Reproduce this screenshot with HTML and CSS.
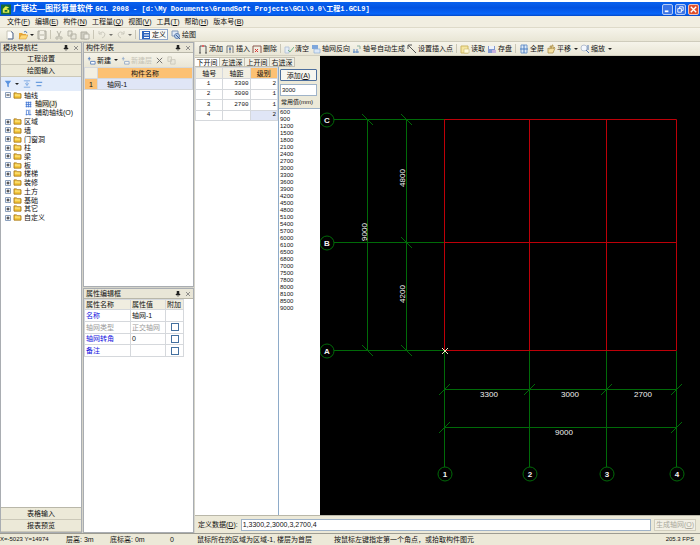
FILE: index.html
```html
<!DOCTYPE html>
<html lang="zh-CN">
<head>
<meta charset="utf-8">
<title>广联达—图形算量软件 GCL 2008</title>
<link rel="stylesheet" href="styles.css">
</head>
<body>
<svg class="defs" aria-hidden="true">
  <symbol id="new" viewBox="0 0 10 10"><path d="M2 1h4l2 2v6H2z" fill="#fff" stroke="#c8c6b8"/><path d="M6 1.5 8 3v6H3" fill="none" stroke="#5a7099"/></symbol>
  <symbol id="open" viewBox="0 0 10 10"><path d="M1 9V3h3l1 1h3v5z" fill="#e9a83a"/><path d="M1 9l2-4h7L8 9z" fill="#ffd978" stroke="#c98a2a" stroke-width=".5"/><path d="M6 2q2-2 3 1" fill="none" stroke="#4b78b8"/></symbol>
  <symbol id="save" viewBox="0 0 10 10"><path d="M1 1h8v8H1z" fill="#d4d2c6" stroke="#aaa89b"/><path d="M3 1h4v3H3zM3 6h4v3H3z" fill="#f3f1e7"/></symbol>
  <symbol id="cut" viewBox="0 0 10 10"><path d="M3 1l3 6M7 1 4 7" stroke="#b5b3a6" fill="none"/><circle cx="3" cy="8" r="1.2" fill="none" stroke="#b5b3a6"/><circle cx="7" cy="8" r="1.2" fill="none" stroke="#b5b3a6"/></symbol>
  <symbol id="copy" viewBox="0 0 10 10"><path d="M1 1h4v5H1zM4 4h5v5H4z" fill="#e8e6da" stroke="#b5b3a6"/></symbol>
  <symbol id="paste" viewBox="0 0 10 10"><path d="M1 2h6v7H1z" fill="#cfcdc1" stroke="#b0aea1"/><path d="M4 4h5v5H4z" fill="#f0eee4" stroke="#b5b3a6"/></symbol>
  <symbol id="undo" viewBox="0 0 10 10"><path d="M2 4q4-4 6 0q0 3-3 4M2 1v3h3" fill="none" stroke="#b5b3a6"/></symbol>
  <symbol id="redo" viewBox="0 0 10 10"><path d="M8 4q-4-4-6 0q0 3 3 4M8 1v3H5" fill="none" stroke="#b5b3a6"/></symbol>
  <symbol id="define" viewBox="0 0 10 10"><path d="M1 1h8v8H1z" fill="#2e65bd"/><path d="M3 2h5v1H3zM3 4.500h5v1H3zM3 7h5v1H3z" fill="#fff"/></symbol>
  <symbol id="draw" viewBox="0 0 10 10"><path d="M1 1h6v5H1z" fill="#dfe8f5" stroke="#8298b8"/><circle cx="6" cy="6" r="2.500" fill="#b9cfe9" stroke="#5f7fae"/><path d="M5 5l4 4" stroke="#3a5f9c"/></symbol>
  <symbol id="axis" viewBox="0 0 10 10"><path d="M2 9V2h2M8 9V2H6M1 9h2M7 9h2" fill="none" stroke="#555"/><path d="M4 1h2v2H4z" fill="#d66"/></symbol>
  <symbol id="axisin" viewBox="0 0 10 10"><path d="M2 9V2h6v7M5 3v6" fill="none" stroke="#777"/><path d="M4 4h2v2H4z" fill="#5a86c8"/></symbol>
  <symbol id="axisdel" viewBox="0 0 10 10"><path d="M1 9V2h8v7" fill="none" stroke="#8a5a50"/><path d="M3 5l3 3M6 5 3 8" stroke="#d33"/></symbol>
  <symbol id="clear" viewBox="0 0 10 10"><path d="M1 3h4v6H1z" fill="#e4ecf6" stroke="#b8c6d8"/><path d="M4 6l2 2 4-5" fill="none" stroke="#73b58a"/></symbol>
  <symbol id="flip" viewBox="0 0 10 10"><path d="M1 1h6v4H1z" fill="#7ea7dc"/><path d="M3 5h6v4H3z" fill="#dce8f7" stroke="#90afd5" stroke-width=".7"/></symbol>
  <symbol id="auto" viewBox="0 0 10 10"><path d="M1 8h6M2 5v4M5 5v4" stroke="#5c88c4"/><path d="M5 2h3v3" fill="none" stroke="#8fb3a0"/></symbol>
  <symbol id="point" viewBox="0 0 10 10"><path d="M1 5V1h4M1 1l8 8" fill="none" stroke="#555"/></symbol>
  <symbol id="read" viewBox="0 0 10 10"><path d="M1 2h7v7H1z" fill="#f6e6a0" stroke="#cdb765"/><path d="M4 5h5v4H4z" fill="#fffbe0" stroke="#c9b871" stroke-width=".6"/></symbol>
  <symbol id="disk" viewBox="0 0 10 10"><path d="M1 2h7v7H1z" fill="#8299d2"/><path d="M2 2h5v3H2z" fill="#eef2fc"/><path d="M5 6h4v3H5z" fill="#c6b1de"/></symbol>
  <symbol id="full" viewBox="0 0 10 10"><path d="M2 1h6v8H2z" fill="#dce9f8" stroke="#7098cc"/><path d="M5 1v8M1 5h8" stroke="#4d7fc0"/></symbol>
  <symbol id="pan" viewBox="0 0 10 10"><path d="M2 9V4l2 1V2h1v3l1-4h1v4l1-2 1 1-2 5z" fill="#f4dfa0" stroke="#a58743" stroke-width=".7"/></symbol>
  <symbol id="zoomi" viewBox="0 0 10 10"><circle cx="4" cy="4" r="3" fill="#f4f8ff" stroke="#b7c0cf"/><path d="M6 6l3 3M8 1v5" stroke="#4c75b4"/></symbol>
  <symbol id="build" viewBox="0 0 10 10"><path d="M1 3h3M2.500 1v4M4 6h5v3H4z" fill="#fff" stroke="#5b82bd"/></symbol>
  <symbol id="del" viewBox="0 0 10 10"><path d="M2 2l6 6M8 2 2 8" stroke="#666"/></symbol>
  <symbol id="filter" viewBox="0 0 10 10"><path d="M1 1h8L6 5v4L4 8V5z" fill="#5a93e0"/></symbol>
  <symbol id="expand" viewBox="0 0 10 10"><path d="M1 1h8M1 9h8M3 4l2 3 2-3M5 2v4" fill="none" stroke="#6c9ede"/></symbol>
  <symbol id="collapse" viewBox="0 0 10 10"><path d="M1 3h8M2 7h6" stroke="#6c9ede" stroke-width="1.500"/></symbol>
  <symbol id="folder" viewBox="0 0 10 8"><path d="M1 1h3l1 1h4v5H1z" fill="#f5c83c" stroke="#a9781a"/><path d="M2 3h6v1H2z" fill="#fff0a0"/></symbol>
  <symbol id="grid" viewBox="0 0 10 10"><path d="M1 1h8v8H1z" fill="#dce9ff"/><path d="M1 2h8M1 5h8M1 8h8M2 1v8M5 1v8M8 1v8" stroke="#3b70ce"/></symbol>
  <symbol id="aux" viewBox="0 0 10 10"><path d="M2 1v8M7 1v8M1 8h8M3 2h3M5 3v4" stroke="#3b70ce" fill="none"/></symbol>
  <symbol id="plus" viewBox="0 0 6 6"><path d="M.5.500h5v5h-5z" fill="#f4f6fa" stroke="#8ba0bd"/><path d="M1.500 3h3M3 1.500v3" stroke="#222"/></symbol>
  <symbol id="minus" viewBox="0 0 6 6"><path d="M.5.500h5v5h-5z" fill="#f4f6fa" stroke="#8ba0bd"/><path d="M1.500 3h3" stroke="#222"/></symbol>
  <symbol id="pin" viewBox="0 0 6 6"><path d="M2 0h2v3h1v1H1V3h1zM3 4v2" fill="#222" stroke="#222" stroke-width=".5"/></symbol>
  <symbol id="x" viewBox="0 0 6 6"><path d="M1 1l4 4M5 1 1 5" stroke="#777" stroke-width=".8"/></symbol>
  <symbol id="down" viewBox="0 0 4 4"><path d="M0 1h4L2 3z" fill="#222"/></symbol>
</svg>

<div class="app">
  <header class="title">
    <svg class="logo" viewBox="0 0 11 11"><path d="M0 0h11v11H0z" fill="#176b3b"/><path d="M2 9V5l3-3 4 1-3 2 3 1v3z" fill="#e4f04a"/><path d="M4 8V6h3v2z" fill="#176b3b"/></svg>
    <h1>广联达—图形算量软件 <span class="path">GCL 2008 - [d:\My Documents\GrandSoft Projects\GCL\9.0\工程1.GCL9]</span></h1>
    <button class="win" aria-label="最小化"><svg viewBox="0 0 10 10"><path d="M2 7h4" stroke="#fff" stroke-width="2"/></svg></button>
    <button class="win" aria-label="还原"><svg viewBox="0 0 10 10"><path d="M4 4V2h4v4H6M2 4h4v4H2z" fill="none" stroke="#fff"/></svg></button>
    <button class="win close" aria-label="关闭"><svg viewBox="0 0 10 10"><path d="M2 2l6 6M8 2 2 8" stroke="#fff" stroke-width="1.500"/></svg></button>
  </header>

  <nav class="menu">
    <button>文件(<u>F</u>)</button><button>编辑(<u>E</u>)</button><button>构件(<u>N</u>)</button><button>工程量(<u>Q</u>)</button><button>视图(<u>V</u>)</button><button>工具(<u>T</u>)</button><button>帮助(<u>H</u>)</button><button>版本号(<u>B</u>)</button>
  </nav>

  <div class="bar main-bar">
    <button aria-label="新建文件"><svg><use href="#new"/></svg></button>
    <button aria-label="打开"><svg><use href="#open"/></svg><svg class="dd"><use href="#down"/></svg></button>
    <button aria-label="保存"><svg><use href="#save"/></svg></button>
    <i class="sep"></i>
    <button aria-label="剪切"><svg><use href="#cut"/></svg></button>
    <button aria-label="复制"><svg><use href="#copy"/></svg></button>
    <button aria-label="粘贴"><svg><use href="#paste"/></svg></button>
    <i class="sep"></i>
    <button class="off" aria-label="撤销"><svg><use href="#undo"/></svg><svg class="dd"><use href="#down"/></svg></button>
    <button class="off" aria-label="重做"><svg><use href="#redo"/></svg><svg class="dd"><use href="#down"/></svg></button>
    <i class="sep"></i>
    <button class="pressed"><svg><use href="#define"/></svg>定义</button>
    <button><svg><use href="#draw"/></svg>绘图</button>
  </div>

  <main class="work">
    <aside class="panel nav">
      <h2>模块导航栏<svg><use href="#pin"/></svg><svg><use href="#x"/></svg></h2>
      <button class="module">工程设置</button>
      <button class="module">绘图输入</button>
      <div class="bar nav-bar">
        <button aria-label="过滤"><svg><use href="#filter"/></svg><svg class="dd"><use href="#down"/></svg></button>
        <button aria-label="展开"><svg><use href="#expand"/></svg></button>
        <button aria-label="折叠"><svg><use href="#collapse"/></svg></button>
      </div>
      <div class="tree-box">
        <ul class="tree">
          <li><svg class="box"><use href="#minus"/></svg><svg><use href="#folder"/></svg>轴线</li>
          <li class="child"><svg><use href="#grid"/></svg><span class="chosen">轴网(J)</span></li>
          <li class="child"><svg><use href="#aux"/></svg>辅助轴线(O)</li>
          <li><svg class="box"><use href="#plus"/></svg><svg><use href="#folder"/></svg>区域</li>
          <li><svg class="box"><use href="#plus"/></svg><svg><use href="#folder"/></svg>墙</li>
          <li><svg class="box"><use href="#plus"/></svg><svg><use href="#folder"/></svg>门窗洞</li>
          <li><svg class="box"><use href="#plus"/></svg><svg><use href="#folder"/></svg>柱</li>
          <li><svg class="box"><use href="#plus"/></svg><svg><use href="#folder"/></svg>梁</li>
          <li><svg class="box"><use href="#plus"/></svg><svg><use href="#folder"/></svg>板</li>
          <li><svg class="box"><use href="#plus"/></svg><svg><use href="#folder"/></svg>楼梯</li>
          <li><svg class="box"><use href="#plus"/></svg><svg><use href="#folder"/></svg>装修</li>
          <li><svg class="box"><use href="#plus"/></svg><svg><use href="#folder"/></svg>土方</li>
          <li><svg class="box"><use href="#plus"/></svg><svg><use href="#folder"/></svg>基础</li>
          <li><svg class="box"><use href="#plus"/></svg><svg><use href="#folder"/></svg>其它</li>
          <li><svg class="box"><use href="#plus"/></svg><svg><use href="#folder"/></svg>自定义</li>
        </ul>
      </div>
      <button class="module">表格输入</button>
      <button class="module">报表预览</button>
    </aside>

    <div class="middle">
      <section class="panel list">
        <h2>构件列表<svg><use href="#pin"/></svg><svg><use href="#x"/></svg></h2>
        <div class="bar list-bar">
          <button><svg><use href="#build"/></svg>新建<svg class="dd"><use href="#down"/></svg></button>
          <button class="off" disabled><svg><use href="#build"/></svg>新建层</button>
          <button aria-label="删除"><svg><use href="#del"/></svg></button>
          <button class="off" aria-label="复制构件"><svg><use href="#copy"/></svg></button>
        </div>
        <table class="parts">
          <thead><tr><th class="num"></th><th class="hot">构件名称</th></tr></thead>
          <tbody><tr><td class="num hot">1</td><td class="sel">轴网-1</td></tr></tbody>
        </table>
      </section>
      <section class="panel props">
        <h2>属性编辑框<svg><use href="#pin"/></svg><svg><use href="#x"/></svg></h2>
        <table class="attrs">
          <thead><tr><th class="name">属性名称</th><th class="value">属性值</th><th class="extra">附加</th></tr></thead>
          <tbody>
            <tr><td class="blue">名称</td><td>轴网-1</td><td></td></tr>
            <tr class="gray"><td>轴网类型</td><td>正交轴网</td><td><input type="checkbox" aria-label="附加轴网类型"></td></tr>
            <tr><td class="blue">轴网转角</td><td>0</td><td><input type="checkbox" aria-label="附加轴网转角"></td></tr>
            <tr><td class="blue">备注</td><td></td><td><input type="checkbox" aria-label="附加备注"></td></tr>
          </tbody>
        </table>
      </section>
    </div>

    <section class="editor">
      <div class="bar edit-bar">
        <button><svg><use href="#axis"/></svg>添加</button>
        <button><svg><use href="#axisin"/></svg>插入</button>
        <button><svg><use href="#axisdel"/></svg>删除</button>
        <i class="sep"></i>
        <button><svg><use href="#clear"/></svg>清空</button>
        <button><svg><use href="#flip"/></svg>轴网反向</button>
        <button><svg><use href="#auto"/></svg>轴号自动生成</button>
        <button><svg><use href="#point"/></svg>设置插入点</button>
        <i class="sep"></i>
        <button><svg><use href="#read"/></svg>读取</button>
        <button><svg><use href="#disk"/></svg>存盘</button>
        <i class="sep"></i>
        <button><svg><use href="#full"/></svg>全屏</button>
        <button><svg><use href="#pan"/></svg>平移<svg class="dd"><use href="#down"/></svg></button>
        <button><svg><use href="#zoomi"/></svg>缩放<svg class="dd"><use href="#down"/></svg></button>
      </div>
      <div class="stage">
        <div class="input-side">
          <div class="tabs"><button class="on">下开间</button><button>左进深</button><button>上开间</button><button>右进深</button></div>
          <div class="entry">
            <div class="spans-box">
              <table class="spans">
                <thead><tr><th>轴号</th><th>轴距</th><th class="hot">级别</th></tr></thead>
                <tbody>
                  <tr><td>1</td><td>3300</td><td>2</td></tr>
                  <tr><td>2</td><td>3000</td><td>1</td></tr>
                  <tr><td>3</td><td>2700</td><td>1</td></tr>
                  <tr><td>4</td><td></td><td class="sel">2</td></tr>
                </tbody>
              </table>
            </div>
            <div class="common">
              <button class="add">添加(<u>A</u>)</button>
              <input class="field" type="text" value="3000" aria-label="轴距">
              <label for="sizes">常用值(mm)</label>
              <select id="sizes" size="29">
                <option>600<option>900<option>1200<option>1500<option>1800<option>2100<option>2400<option>2700<option>3000<option>3300<option>3600<option>3900<option>4200<option>4500<option>4800<option>5100<option>5400<option>5700<option>6000<option>6100<option>6500<option>6800<option>7000<option>7500<option>7800<option>8000<option>8100<option>8500<option>9000
              </select>
            </div>
          </div>
        </div>
        <div class="canvas">
          <svg viewBox="320 56 380 459" preserveAspectRatio="xMinYMin meet">
            <g class="green">
              <path d="M334 119.500H445M334 242.500H445M334 350.500H445"/>
              <path d="M367.500 120V351M406.500 120V351"/>
              <path d="M444.500 351V467M529.500 351V467M606.500 351V467M676.500 351V467"/>
              <path d="M445 389.500H677M445 427.500H677"/>
              <path d="M362 114l11 11M401 114l11 11M401 237l11 11M362 345l11 11M401 345l11 11"/>
              <path d="M439 395l11-11M524 395l11-11M601 395l11-11M671 395l11-11M439 433l11-11M671 433l11-11"/>
              <circle cx="327" cy="120" r="7"/><circle cx="327" cy="243" r="7"/><circle cx="327" cy="351" r="7"/>
              <circle cx="445" cy="474" r="7"/><circle cx="530" cy="474" r="7"/><circle cx="607" cy="474" r="7"/><circle cx="677" cy="474" r="7"/>
            </g>
            <path class="red" d="M444.500 119.500H676.500V350.500H444.500zM529.500 120V351M606.500 120V351M445 242.500H676"/>
            <path class="origin" d="M442 348l6 6M448 348l-6 6"/>
            <g class="marks">
              <text x="327" y="123">C</text><text x="327" y="246">B</text><text x="327" y="354">A</text>
              <text x="445" y="477">1</text><text x="530" y="477">2</text><text x="607" y="477">3</text><text x="677" y="477">4</text>
            </g>
            <g class="dims">
              <text x="489" y="397">3300</text><text x="570" y="397">3000</text><text x="643" y="397">2700</text><text x="564" y="435">9000</text>
              <text transform="translate(405 178) rotate(-90)">4800</text>
              <text transform="translate(405 294) rotate(-90)">4200</text>
              <text transform="translate(367 232) rotate(-90)">9000</text>
            </g>
          </svg>
        </div>
      </div>
      <div class="data">
        <label for="def">定义数据(<u>D</u>):</label>
        <input id="def" class="field" type="text" value="1,3300,2,3000,3,2700,4">
        <button disabled>生成轴网(<u>O</u>)</button>
      </div>
    </section>
  </main>

  <footer class="status">
    <span class="pos">X=-5023 Y=14974</span><span class="floor">层高: 3m</span><span class="base">底标高: 0m</span><span class="zero">0</span><span class="area">鼠标所在的区域为区域-1, 楼层为首层</span><span class="hint">按鼠标左键指定第一个角点，或拾取构件图元</span><span class="fps">205.3 FPS</span>
  </footer>
</div>
</body>
</html>
```
FILE: styles.css
```css
* { box-sizing: border-box; }
body {
  margin: 0;
  font: 7px/9px "Liberation Sans", "Noto Sans CJK SC", sans-serif;
  color: #111;
  background: #fff;
}
button, input, select { font: inherit; color: inherit; margin: 0; padding: 0; border-radius: 0; }
button { border: 0; background: none; white-space: nowrap; }
ul { list-style: none; margin: 0; padding: 0; }
svg { flex: none; }
table { border-collapse: collapse; table-layout: fixed; }
th, td { padding: 0; font-weight: normal; border: 1px solid #d5d8dc; white-space: nowrap; }
.defs { display: none; }

.app { display: flex; flex-direction: column; height: 100vh; padding-top: 2px; overflow: hidden; background: #ece9d8; }

/* title bar */
.title {
  display: flex; align-items: center; gap: 2px; flex: none; height: 14px; padding: 0 1px;
  background: linear-gradient(#0a62ee, #0353e2 40%, #0866fa 85%, #0448c4);
  box-shadow: 0 -2px #fff;
}
.logo { width: 10px; height: 11px; }
.title h1 { flex: 1; margin: 0; font-size: 8px; line-height: 12px; font-weight: bold; color: #fff; white-space: nowrap; }
.title .path { font-family: "Liberation Mono", "Noto Sans CJK SC", monospace; font-size: 7px; }
.win { width: 11px; height: 11px; border: 1px solid #b5cbf5; border-radius: 2px; background: #3b74e6; display: flex; }
.win svg { width: 9px; height: 9px; }
.win.close { background: #e0502c; border-color: #f3c4b6; }

/* menus and tool bars */
.menu { display: flex; gap: 5px; flex: none; height: 12px; padding: 0 7px; background: #f1eee1; border-bottom: 1px solid #dedac9; }
.bar { display: flex; align-items: center; flex: none; background: linear-gradient(#f6f4ea, #e9e6d6); }
.bar button { display: flex; align-items: center; gap: 1px; height: 11px; }
.bar svg { width: 10px; height: 10px; }
.bar .dd { width: 4px; height: 4px; margin-left: 2px; }
.bar .off { color: #aaa89b; opacity: 0.6; }
.sep { width: 1px; height: 9px; background: #c9c6b6; }
.main-bar { height: 14px; padding: 0 5px; gap: 3px; border-bottom: 1px solid #cfccbc; }
.main-bar .dd { margin-left: 1px; }
.main-bar .pressed { padding: 0 1px; background: #fbfaf6; border: 1px solid #90a8cc; }

/* panels */
.work { display: flex; flex: 1; min-height: 0; gap: 1px; background: #d5d4ca; }
.panel { display: flex; flex-direction: column; min-height: 0; background: #fff; border: 1px solid #a9adb2; }
.panel h2 { display: flex; align-items: center; gap: 4px; flex: none; height: 10px; margin: 0; padding: 0 2px; font-size: 7px; font-weight: normal; background: #e9e6d7; border-bottom: 1px solid #b9b7a9; }
.panel h2 svg { width: 6px; height: 6px; }
.panel h2 svg:first-of-type { margin-left: auto; }
.nav { flex: 0 0 82px; }
.module { flex: none; height: 12px; background: #ece9d8; border-bottom: 1px solid #cbc8b8; }
.nav-bar { height: 14px; padding: 0 3px; gap: 4px; background: #e3ecfa; }
.nav-bar svg { width: 8px; height: 8px; }
.tree-box { flex: 1; min-height: 0; border-bottom: 1px solid #b9b7a9; }
.tree { display: grid; grid-auto-rows: 1fr; height: 131px; padding-left: 4px; }
.tree li { display: flex; align-items: center; gap: 2px; min-height: 0; white-space: nowrap; }
.tree svg { width: 9px; height: 7px; }
.tree .box { width: 6px; height: 6px; }
.tree .child { padding-left: 19px; }
.chosen { background: #ece9d8; line-height: 8px; }

.middle { display: flex; flex-direction: column; flex: 0 0 111px; gap: 1px; }
.list, .props { flex: 1; }
.list-bar { height: 14px; padding: 0 3px; gap: 3px; }
.list-bar svg { width: 9px; height: 9px; }
.hot { background: #fcc173; }
.sel { background: #e0e6f6; }
.parts { width: 100%; }
.parts th, .parts td { height: 11px; }
.parts th { background-color: #f2efe3; }
.parts .num { width: 13px; text-align: center; }
.parts th.hot, .spans th.hot { background: #fcc173; }
.parts td.sel { padding-left: 9px; }
.attrs { width: 99px; height: 58px; }
.attrs th { background: #f0ede0; text-align: left; }
.attrs th, .attrs td { padding-left: 1px; line-height: 9px; }
.attrs .name { width: 46px; }
.attrs .value { width: 35px; }
.attrs .extra { width: 18px; }
.attrs td:last-child { text-align: center; }
.attrs .blue { color: #1414e0; }
.attrs .gray { color: #9a9a9a; }
.attrs input { appearance: none; display: block; width: 8px; height: 8px; margin: 0 auto; border: 1px solid #44709f; background: #fff; }

/* axis editor */
.editor { display: flex; flex-direction: column; flex: 1; min-width: 0; background: #ece9d8; }
.edit-bar { height: 14px; padding: 0 3px; gap: 2px; border-bottom: 1px solid #d2cfbf; }
.edit-bar .sep { margin: 0 1px; }
.stage { display: flex; flex: 1; min-height: 0; }
.input-side { display: flex; flex-direction: column; flex: 0 0 125px; min-width: 0; }
.tabs { display: flex; height: 11px; padding-top: 1px; }
.tabs button { width: 25px; background: #f1efe4; border: 1px solid #c4c1b2; border-left: 0; }
.tabs .on { background: #fff; }
.entry { display: flex; flex: 1; min-height: 0; }
.spans-box { flex: 0 0 83px; background: #fff; }
.spans { width: 83px; height: 54px; }
.spans th { height: 11px; background: #f2efe3; }
.spans td { font: 6px/8px "Liberation Mono", monospace; text-align: right; padding-right: 1px; }
.spans td:first-child { text-align: center; }
.common { display: flex; flex-direction: column; flex: 1; min-width: 0; padding-top: 2px; border-left: 1px solid #8eabc9; }
.add { height: 12px; margin: 0 3px 3px 1px; border: 1px solid #4d6f9c; border-radius: 1px; background: #f7f6f0; }
.field { min-width: 0; border: 1px solid #9fb3c8; background: #fff; padding: 0 1px; }
.common .field { height: 12px; margin: 0 3px 0 1px; font-size: 6px; }
.common label { height: 12px; padding: 2px 0 0 2px; font-size: 6px; white-space: nowrap; }
.common select { flex: 1; min-height: 0; appearance: none; border: 0; border-top: 1px solid #9fb3c8; background: #fff; overflow: hidden; font-size: 6px; }
.common option { min-height: 7px; height: 7px; line-height: 7px; padding: 0 1px; }
.canvas { flex: 1; min-width: 0; background: #000; overflow: hidden; }
.canvas svg { display: block; width: 100%; height: 100%; }
.green { fill: none; stroke: #006a08; }
.red { fill: none; stroke: #bd0008; }
.origin { stroke: #f4e7c0; }
.marks, .dims { fill: #f0f0f0; font-size: 8px; text-anchor: middle; }
.marks { font-weight: bold; }
.data { display: flex; align-items: center; gap: 3px; flex: none; height: 18px; padding: 0 4px 0 3px; border-top: 1px solid #b9b7a9; }
.data .field { flex: 1; height: 12px; }
.data button { width: 42px; height: 12px; color: #aaa89b; background: #f2f0e6; border: 1px solid #d0cdbd; }

/* status bar */
.status { display: flex; flex: none; height: 12px; padding: 0 6px 0 0; line-height: 11px; border-top: 1px solid #9d9c92; white-space: nowrap; background: #ece9d8; }
.pos { flex: 0 0 66px; font-size: 6px; }
.floor { flex: 0 0 44px; }
.base { flex: 0 0 60px; }
.zero { flex: 0 0 27px; }
.area { flex: 0 0 137px; }
.hint { flex: 1; }
.fps { font-size: 6px; }
```
